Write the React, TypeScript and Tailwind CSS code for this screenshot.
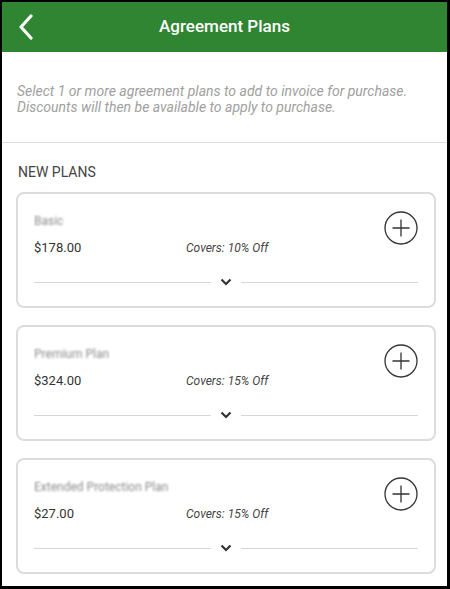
const plans = [
  { name: "Basic", price: "$178.00", covers: "10% Off", nameWidth: "w-[46px]" },
  { name: "Premium Plan", price: "$324.00", covers: "15% Off", nameWidth: "w-[76px]" },
  { name: "Extended Protection Plan", price: "$27.00", covers: "15% Off", nameWidth: "w-[140px]" },
];

const PlusCircle = () => (
  <svg className="-mt-[2px]" width="34" height="34" viewBox="0 0 34 34" fill="none">
    <circle cx="17" cy="17" r="16" stroke="#333" strokeWidth="1.3" />
    <path d="M17 8.5v17M8.5 17h17" stroke="#333" strokeWidth="1.3" />
  </svg>
);

const Chevron = () => (
  <svg width="12" height="8" viewBox="0 0 12 8" fill="none">
    <path d="M1.5 1.5l4.5 4.5 4.5-4.5" stroke="#333" strokeWidth="2.2" />
  </svg>
);

const PlanCard = ({ plan }: { plan: (typeof plans)[number] }) => (
  <div className="border-2 border-[#dcdcdc] rounded-lg pt-[19px] pb-[20px] px-[16px]">
    <div className="flex items-start justify-between">
      <div>
        <div className={`${plan.nameWidth} h-[16px] overflow-hidden`}>
          <span className="block whitespace-nowrap text-[12px] text-[#8c8c8c] blur-[1px] leading-[16px]">
            {plan.name}
          </span>
        </div>
        <div className="flex items-center mt-[11px] leading-[16px]">
          <span className="w-[152px] text-[13px] text-[#333]">{plan.price}</span>
          <span className="text-[12px] italic text-[#444]">Covers: {plan.covers}</span>
        </div>
      </div>
      <PlusCircle />
    </div>
    <div className="flex items-center mt-[22px]">
      <div className="w-[177px] h-px bg-[#d6d6d6]" />
      <div className="flex-1 flex justify-center">
        <Chevron />
      </div>
      <div className="w-[177px] h-px bg-[#d6d6d6]" />
    </div>
  </div>
);

export default function App() {
  return (
    <div
      className="w-[450px] h-[589px] overflow-hidden bg-white border-l-2 border-t-2 border-r-[3px] border-b-[3px] border-black"
      style={{ fontFamily: "Roboto, 'Noto Sans', sans-serif" }}
    >
      <div className="h-[50px] bg-[#2f8532] flex items-center relative">
        <svg className="absolute left-[16px] top-[12px]" width="16" height="26" viewBox="0 0 16 26" fill="none">
          <path d="M13 2L3 13l10 11" stroke="white" strokeWidth="3.2" strokeLinecap="round" strokeLinejoin="round" />
        </svg>
        <h1 className="w-full text-center text-white text-[17px] font-medium">Agreement Plans</h1>
      </div>

      <div className="px-[15px] pt-[31px] pb-[27px] border-b border-[#dddddd]">
        <p className="text-[14px] italic text-[#a0a0a0] leading-[16px]">
          Select 1 or more agreement plans to add to invoice for purchase.
          <br />
          Discounts will then be available to apply to purchase.
        </p>
      </div>

      <div className="pl-[14px] pr-[11px]">
        <p className="text-[14px] text-[#444] mt-[21px] mb-[12px] ml-[2px] leading-[16px]">NEW PLANS</p>
        <div className="flex flex-col gap-[17px]">
          {plans.map((p) => (
            <PlanCard key={p.price} plan={p} />
          ))}
        </div>
      </div>
    </div>
  );
}
